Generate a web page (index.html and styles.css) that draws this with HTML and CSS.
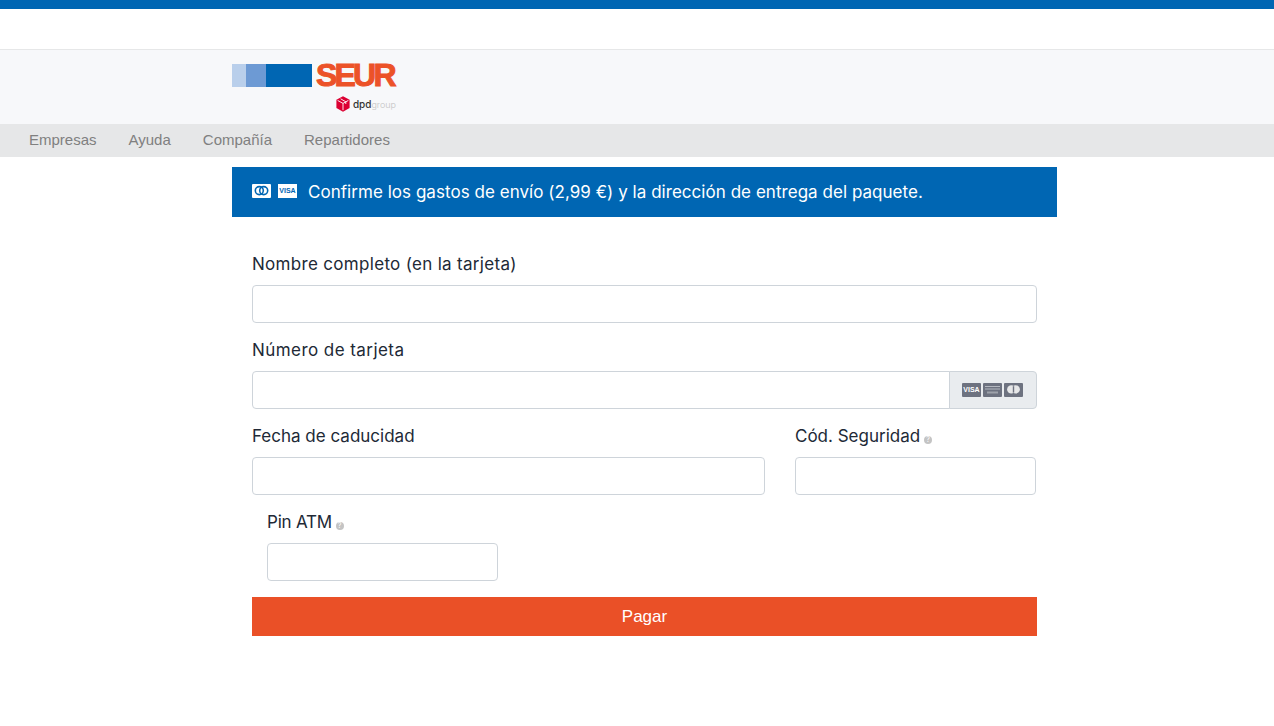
FILE: index.html
```html
<!DOCTYPE html>
<html>
<head>
  <meta charset="UTF-8">
  <title>SEUR - Pago</title>
  <link rel="stylesheet" href="styles.css">
</head>
<body>
  <div class="top-bar"></div>
  <div class="top-space"></div>
  <header class="header">
    <div class="logo">
      <div class="logo-row">
        <span class="bar bar-light"></span>
        <span class="bar bar-mid"></span>
        <span class="bar bar-dark"></span>
        <span class="logo-name">SEUR</span>
      </div>
      <div class="logo-sub">
        <svg class="cube" width="14" height="16" viewBox="0 0 14 16">
          <path d="M7 0.3L13.6 3.8V11.9L7 15.7L0.4 11.9V3.8Z" fill="#dc0032"/>
          <path d="M1.6 4.4L7 7.4L12.4 4.4M7 7.4V14.2M4.6 2.8L9.8 5.8V8" fill="none" stroke="#fff" stroke-width="0.9"/>
        </svg>
        <span class="dpd">dpd</span><span class="group">group</span>
      </div>
    </div>
  </header>
  <nav class="nav">
    <a href="#">Empresas</a>
    <a href="#">Ayuda</a>
    <a href="#">Compañía</a>
    <a href="#">Repartidores</a>
  </nav>

  <main class="content">
    <div class="banner">
      <svg class="card-icon" width="19" height="14" viewBox="0 0 19 14">
        <rect width="19" height="14" rx="1" fill="#fff"/>
        <circle cx="7.3" cy="6.6" r="4" fill="none" stroke="#0066b3" stroke-width="1.6"/>
        <circle cx="11.7" cy="6.6" r="4" fill="none" stroke="#0066b3" stroke-width="1.6"/>
      </svg>
      <span class="visa-card">VISA</span>
      <span class="banner-text">Confirme los gastos de envío (2,99 €) y la dirección de entrega del paquete.</span>
    </div>

    <form class="form">
      <div class="field">
        <label class="label-name">Nombre completo (en la tarjeta)</label>
        <input type="text" class="input">
      </div>
      <div class="field">
        <label class="label-number">Número de tarjeta</label>
        <div class="input-group">
          <input type="text" class="input">
          <div class="addon">
            <span class="mini-card">VISA</span>
            <svg width="19" height="14" viewBox="0 0 19 14">
              <rect width="19" height="14" rx="1" fill="#6d7280"/>
              <path d="M2 3.5H17M2 6H17" stroke="#b4b8c0" stroke-width="1"/>
              <path d="M4 9.5H15" stroke="#9ea2ab" stroke-width="2"/>
            </svg>
            <svg width="19" height="14" viewBox="0 0 19 14">
              <rect width="19" height="14" rx="1" fill="#6d7280"/>
              <circle cx="7.3" cy="6.4" r="4.2" fill="#e6e7e8"/>
              <circle cx="11.7" cy="6.4" r="4.2" fill="#e6e7e8"/>
              <path d="M9.5 3.2V9.6" stroke="#6d7280" stroke-width="1.4"/>
            </svg>
          </div>
        </div>
      </div>
      <div class="field-row">
        <div class="field field-date">
          <label>Fecha de caducidad</label>
          <input type="text" class="input">
        </div>
        <div class="field field-cvv">
          <label>Cód. Seguridad <span class="help">?</span></label>
          <input type="text" class="input">
        </div>
      </div>
      <div class="field field-pin">
        <label class="label-pin">Pin ATM <span class="help">?</span></label>
        <input type="text" class="input">
      </div>
      <button type="button" class="pay">Pagar</button>
    </form>
  </main>
</body>
</html>
```

FILE: styles.css
```css
* {
  box-sizing: border-box;
}
body {
  margin: 0;
  background: #fff;
  font-family: "Liberation Sans", Arial, sans-serif;
  font-size: 16px;
}
.top-bar {
  height: 9px;
  background: #0066b3;
}
.top-space {
  height: 40px;
}
.header {
  height: 75px;
  padding: 14px 0 0 232px;
  background: #f7f8fa;
  border-top: 1px solid #e6e7e8;
}
.logo {
  width: 164px;
}
.logo-row {
  display: flex;
  align-items: center;
  height: 23px;
}
.bar {
  flex: none;
  height: 23px;
}
.bar-light {
  width: 14px;
  background: #b9cfeb;
}
.bar-mid {
  width: 20px;
  background: #6d9ad4;
}
.bar-dark {
  width: 46px;
  background: #0066b3;
}
.logo-name {
  margin-left: 4px;
  color: #ec5228;
  font-size: 32px;
  font-weight: 700;
  line-height: 23px;
  letter-spacing: -2.8px;
  -webkit-text-stroke: 1px #ec5228;
}
.logo-sub {
  display: flex;
  align-items: center;
  justify-content: flex-end;
  height: 16px;
  margin-top: 9px;
  font-family: Inter, sans-serif;
}
.cube {
  margin-right: 3px;
}
.dpd {
  color: #333;
  font-size: 10px;
  font-weight: 500;
}
.group {
  color: #c4c4c4;
  font-size: 9px;
  font-weight: 300;
}
.nav {
  display: flex;
  gap: 32px;
  height: 33px;
  padding-left: 29px;
  background: #e6e7e8;
}
.nav a {
  color: #808080;
  font-size: 15px;
  line-height: 32px;
  text-decoration: none;
}
.content {
  width: 825px;
  margin: 10px 0 0 232px;
}
.banner {
  display: flex;
  align-items: center;
  height: 50px;
  padding-left: 20px;
  background: #0066b3;
  color: #fff;
}
.card-icon {
  margin-top: -2px;
  margin-right: 7px;
}
.visa-card {
  width: 19px;
  height: 14px;
  margin-top: -2px;
  margin-right: 11px;
  background: #fff;
  color: #0066b3;
  font-size: 7px;
  font-weight: 700;
  line-height: 14px;
  text-align: center;
}
.banner-text {
  margin-top: -1px;
  font-family: Inter, "Noto Sans", sans-serif;
  font-size: 17px;
  line-height: 22px;
  letter-spacing: 0.04px;
}
.form {
  padding: 36px 20px 0;
}
.field {
  margin-bottom: 16px;
}
.field label {
  display: block;
  height: 22px;
  margin-bottom: 10px;
  color: #212936;
  font-family: Inter, "Noto Sans", sans-serif;
  font-size: 17px;
  line-height: 23px;
}
.field .label-name {
  letter-spacing: 0.31px;
}
.field .label-number {
  letter-spacing: 0.44px;
}
.field .label-pin {
  letter-spacing: -0.2px;
}
.input {
  display: block;
  width: 100%;
  height: 38px;
  padding: 6px 12px;
  background: #fff;
  border: 1px solid #ced4da;
  border-radius: 4px;
}
.input-group {
  display: flex;
}
.input-group .input {
  flex: 1;
  border-radius: 4px 0 0 4px;
}
.addon {
  display: flex;
  align-items: center;
  gap: 2px;
  width: 88px;
  height: 38px;
  margin-left: -1px;
  padding-left: 12px;
  background: #e9ecef;
  border: 1px solid #ced4da;
  border-radius: 0 4px 4px 0;
}
.mini-card {
  width: 19px;
  height: 14px;
  border-radius: 1px;
  background: #6d7280;
  color: #fff;
  font-size: 7px;
  font-weight: 700;
  line-height: 14px;
  text-align: center;
}
.field-row {
  display: flex;
  gap: 30px;
}
.field-date {
  width: 513px;
}
.field-cvv {
  width: 241px;
}
.field-pin {
  width: 231px;
  margin-left: 15px;
}
.help {
  display: inline-block;
  width: 8px;
  height: 8px;
  margin-left: -1px;
  border-radius: 50%;
  background: #c4c4c4;
  color: #fff;
  font-size: 7px;
  line-height: 8px;
  letter-spacing: 0;
  text-align: center;
  vertical-align: 0;
}
.pay {
  display: block;
  width: 100%;
  height: 39px;
  padding: 0;
  background: #ea5027;
  border: none;
  color: #fff;
  font-family: "Liberation Sans", Arial, sans-serif;
  font-size: 17px;
  cursor: pointer;
}
```
